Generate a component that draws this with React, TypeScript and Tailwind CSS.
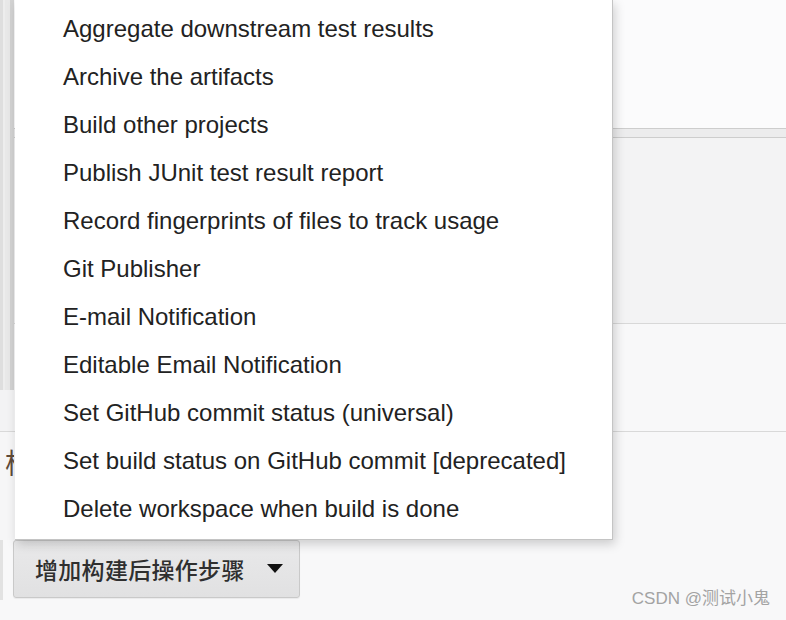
import React from "react";

const items = [
  "Aggregate downstream test results",
  "Archive the artifacts",
  "Build other projects",
  "Publish JUnit test result report",
  "Record fingerprints of files to track usage",
  "Git Publisher",
  "E-mail Notification",
  "Editable Email Notification",
  "Set GitHub commit status (universal)",
  "Set build status on GitHub commit [deprecated]",
  "Delete workspace when build is done",
];

export default function App() {
  return (
    <div className="relative w-[786px] h-[620px] overflow-hidden bg-[#f8f8f9] font-['Liberation_Sans',Arial,sans-serif]">
      {/* page behind the menu */}
      <div className="flex h-full">
        {/* left edge of the config panels */}
        <div className="w-[14px] shrink-0 flex flex-col">
          <div className="h-[390px] flex bg-[#e6e6e7]">
            <div className="w-[3px] bg-[#dedede]" />
            <div className="w-[2px] bg-[#ededed]" />
            <div className="w-[5px] bg-[#e8e8e8]" />
            <div className="w-[4px] bg-[#d3d3d3]" />
          </div>
          <div className="h-[42px] bg-[#f3f3f4] border-b border-[#d9d9d9]" />
          <div className="h-[108px] bg-[#f6f6f7] overflow-hidden">
            <div className="mt-[16px] ml-[5px] whitespace-nowrap text-[28px] text-[#5e4a3a] font-['Noto_Sans_CJK_SC',sans-serif] leading-none">
              构
            </div>
          </div>
          <div className="h-[60px] flex">
            <div className="w-[3px] bg-[#e2e2e2]" />
          </div>
        </div>

        <div className="flex-1 flex flex-col">
          <div className="h-[128px] bg-[#fbfbfc]" />
          <div className="h-[10px] bg-[#ececed] border-t border-b border-[#cdcdcd]" />
          <div className="h-[186px] bg-[#f3f3f4] border-b border-[#d8d8d8]" />
          <div className="h-[108px] bg-[#f8f8f9] border-b border-[#d9d9d9]" />
          <div className="flex-1 bg-[#f8f8f9] pt-[108px]">
            <button className="-ml-[1px] w-[287px] h-[58px] flex items-center pl-[21px] rounded-[3px] border border-[#c9c9c9] bg-gradient-to-b from-[#e9e9ea] to-[#e1e1e2] shadow-[0_1px_1px_rgba(0,0,0,0.06)]">
              <span className="text-[23px] text-[#2f2f2f] font-medium font-['Noto_Sans_CJK_SC',sans-serif] leading-none tracking-[0.3px]">
                增加构建后操作步骤
              </span>
              <svg className="ml-[22px]" width="16" height="10" viewBox="0 0 16 10">
                <path d="M0 0 L16 0 L8 9 Z" fill="#111" />
              </svg>
            </button>
          </div>
        </div>
      </div>

      {/* dropdown menu */}
      <div className="absolute left-[15px] top-0 w-[598px] h-[540px] bg-white border-r border-b border-[#c4c4c4] shadow-[2px_4px_10px_rgba(0,0,0,0.18)] pt-[5px]">
        <ul className="flex flex-col">
          {items.map((t) => (
            <li
              key={t}
              className="h-[48px] flex items-center pl-[48px] text-[24px] text-[#222] whitespace-nowrap"
            >
              {t}
            </li>
          ))}
        </ul>
      </div>

      {/* watermark */}
      <div className="absolute right-[16px] bottom-[9px] text-[17px] text-[#a3a3a3] font-['Liberation_Sans','Noto_Sans_CJK_SC',sans-serif]">
        CSDN @测试小鬼
      </div>
    </div>
  );
}
